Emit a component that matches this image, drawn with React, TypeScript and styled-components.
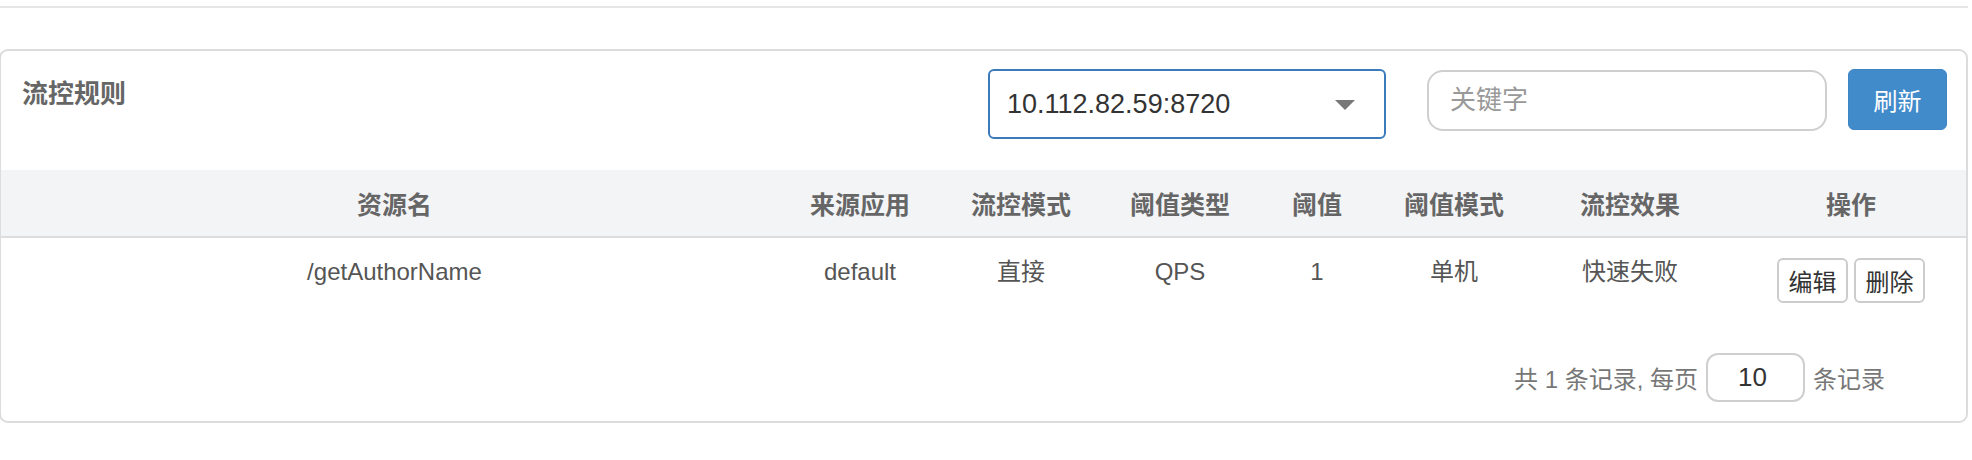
import React from "react";
import styled, { createGlobalStyle } from "styled-components";

const GlobalStyle = createGlobalStyle`
  html, body {
    margin: 0;
    padding: 0;
    background: #fff;
  }
  body {
    font-family: "Liberation Sans", "Noto Sans CJK SC", sans-serif;
    color: #555;
  }
`;

const columns = [
  { key: "resource", title: "资源名", width: "787px" },
  { key: "limitApp", title: "来源应用", width: "144px" },
  { key: "strategy", title: "流控模式", width: "178px" },
  { key: "grade", title: "阈值类型", width: "140px" },
  { key: "count", title: "阈值", width: "134px" },
  { key: "clusterMode", title: "阈值模式", width: "140px" },
  { key: "behavior", title: "流控效果", width: "212px" },
  { key: "ops", title: "操作", width: "1fr" },
];

const rules = [
  {
    resource: "/getAuthorName",
    limitApp: "default",
    strategy: "直接",
    grade: "QPS",
    count: "1",
    clusterMode: "单机",
    behavior: "快速失败",
  },
];

const gridTemplate = columns.map((c) => c.width).join(" ");

function FlowRules() {
  return (
    <Page>
      <TopRule />
      <Card>
        <CardHeader>
          <Title>流控规则</Title>
          <MachineSelect>
            <span>10.112.82.59:8720</span>
            <Caret />
          </MachineSelect>
          <SearchInput placeholder="关键字" />
          <RefreshButton>刷新</RefreshButton>
        </CardHeader>

        <HeadRow $template={gridTemplate}>
          {columns.map((c) => (
            <HeadCell key={c.key}>{c.title}</HeadCell>
          ))}
        </HeadRow>

        {rules.map((r) => (
          <BodyRow key={r.resource} $template={gridTemplate}>
            <Cell>{r.resource}</Cell>
            <Cell>{r.limitApp}</Cell>
            <Cell>{r.strategy}</Cell>
            <Cell>{r.grade}</Cell>
            <Cell>{r.count}</Cell>
            <Cell>{r.clusterMode}</Cell>
            <Cell>{r.behavior}</Cell>
            <Actions>
              <SmallButton>编辑</SmallButton>
              <SmallButton>删除</SmallButton>
            </Actions>
          </BodyRow>
        ))}

        <Pager>
          <PagerText>共 {rules.length} 条记录, 每页</PagerText>
          <PageSize defaultValue="10" />
          <PagerText>条记录</PagerText>
        </Pager>
      </Card>
    </Page>
  );
}

export default function App() {
  return (
    <>
      <GlobalStyle />
      <FlowRules />
    </>
  );
}

const Page = styled.div`
  width: 1968px;
  padding-top: 6px;
`;

const TopRule = styled.div`
  height: 2px;
  background: #e6e6e6;
`;

const Card = styled.div`
  margin: 41px 0 0 -1px;
  border: 2px solid #dcdcdc;
  border-radius: 9px;
  background: #fff;
  overflow: hidden;
`;

const CardHeader = styled.div`
  display: flex;
  align-items: flex-start;
  height: 119px;
  box-sizing: border-box;
  padding: 18px 19px 0 21px;
`;

const Title = styled.div`
  flex: 1;
  margin-top: 8px;
  font-size: 26px;
  line-height: 34px;
  font-weight: bold;
  color: #666;
`;

const MachineSelect = styled.div`
  width: 398px;
  height: 70px;
  box-sizing: border-box;
  display: flex;
  align-items: center;
  justify-content: space-between;
  padding: 0 29px 0 17px;
  border: 2px solid #3b7bbb;
  border-radius: 6px;
  font-size: 27px;
  color: #333;
`;

const Caret = styled.span`
  width: 0;
  height: 0;
  border-left: 10px solid transparent;
  border-right: 10px solid transparent;
  border-top: 10px solid #777;
  margin-top: 2px;
`;

const SearchInput = styled.input`
  margin-left: 41px;
  margin-top: 1px;
  width: 400px;
  height: 61px;
  box-sizing: border-box;
  padding: 0 21px;
  border: 2px solid #cfcfcf;
  border-radius: 16px;
  font-family: inherit;
  font-size: 26px;
  color: #333;
  outline: none;
  &::placeholder {
    color: #999;
  }
`;

const RefreshButton = styled.button`
  margin-left: 21px;
  width: 99px;
  height: 61px;
  border: 1px solid #3f85c3;
  border-radius: 6px;
  background: #428bca;
  color: #fff;
  font-family: inherit;
  font-size: 24px;
  cursor: pointer;
`;

const HeadRow = styled.div<{ $template: string }>`
  display: grid;
  grid-template-columns: ${(p) => p.$template};
  height: 68px;
  box-sizing: border-box;
  align-items: center;
  background: #f3f4f6;
  border-bottom: 2px solid #dddddd;
`;

const HeadCell = styled.div`
  text-align: center;
  font-size: 25px;
  font-weight: bold;
  color: #666;
`;

const BodyRow = styled.div<{ $template: string }>`
  display: grid;
  grid-template-columns: ${(p) => p.$template};
  align-items: start;
  min-height: 95px;
  box-sizing: border-box;
  padding-top: 20px;
`;

const Cell = styled.div`
  text-align: center;
  font-size: 24px;
  line-height: 28px;
  color: #555;
`;

const Actions = styled.div`
  display: flex;
  justify-content: center;
  gap: 6px;
`;

const SmallButton = styled.button`
  width: 71px;
  height: 45px;
  padding: 0;
  border: 2px solid #cccccc;
  border-radius: 6px;
  background: #fff;
  font-family: inherit;
  font-size: 24px;
  color: #333;
  cursor: pointer;
`;

const Pager = styled.div`
  display: flex;
  align-items: center;
  justify-content: flex-end;
  gap: 8px;
  padding: 20px 81px 19px 0;
`;

const PagerText = styled.span`
  font-size: 24px;
  color: #777;
`;

const PageSize = styled.input`
  width: 99px;
  height: 49px;
  box-sizing: border-box;
  padding: 0 0 0 30px;
  border: 2px solid #cfcfcf;
  border-radius: 12px;
  font-family: inherit;
  font-size: 26px;
  color: #333;
  outline: none;
`;
